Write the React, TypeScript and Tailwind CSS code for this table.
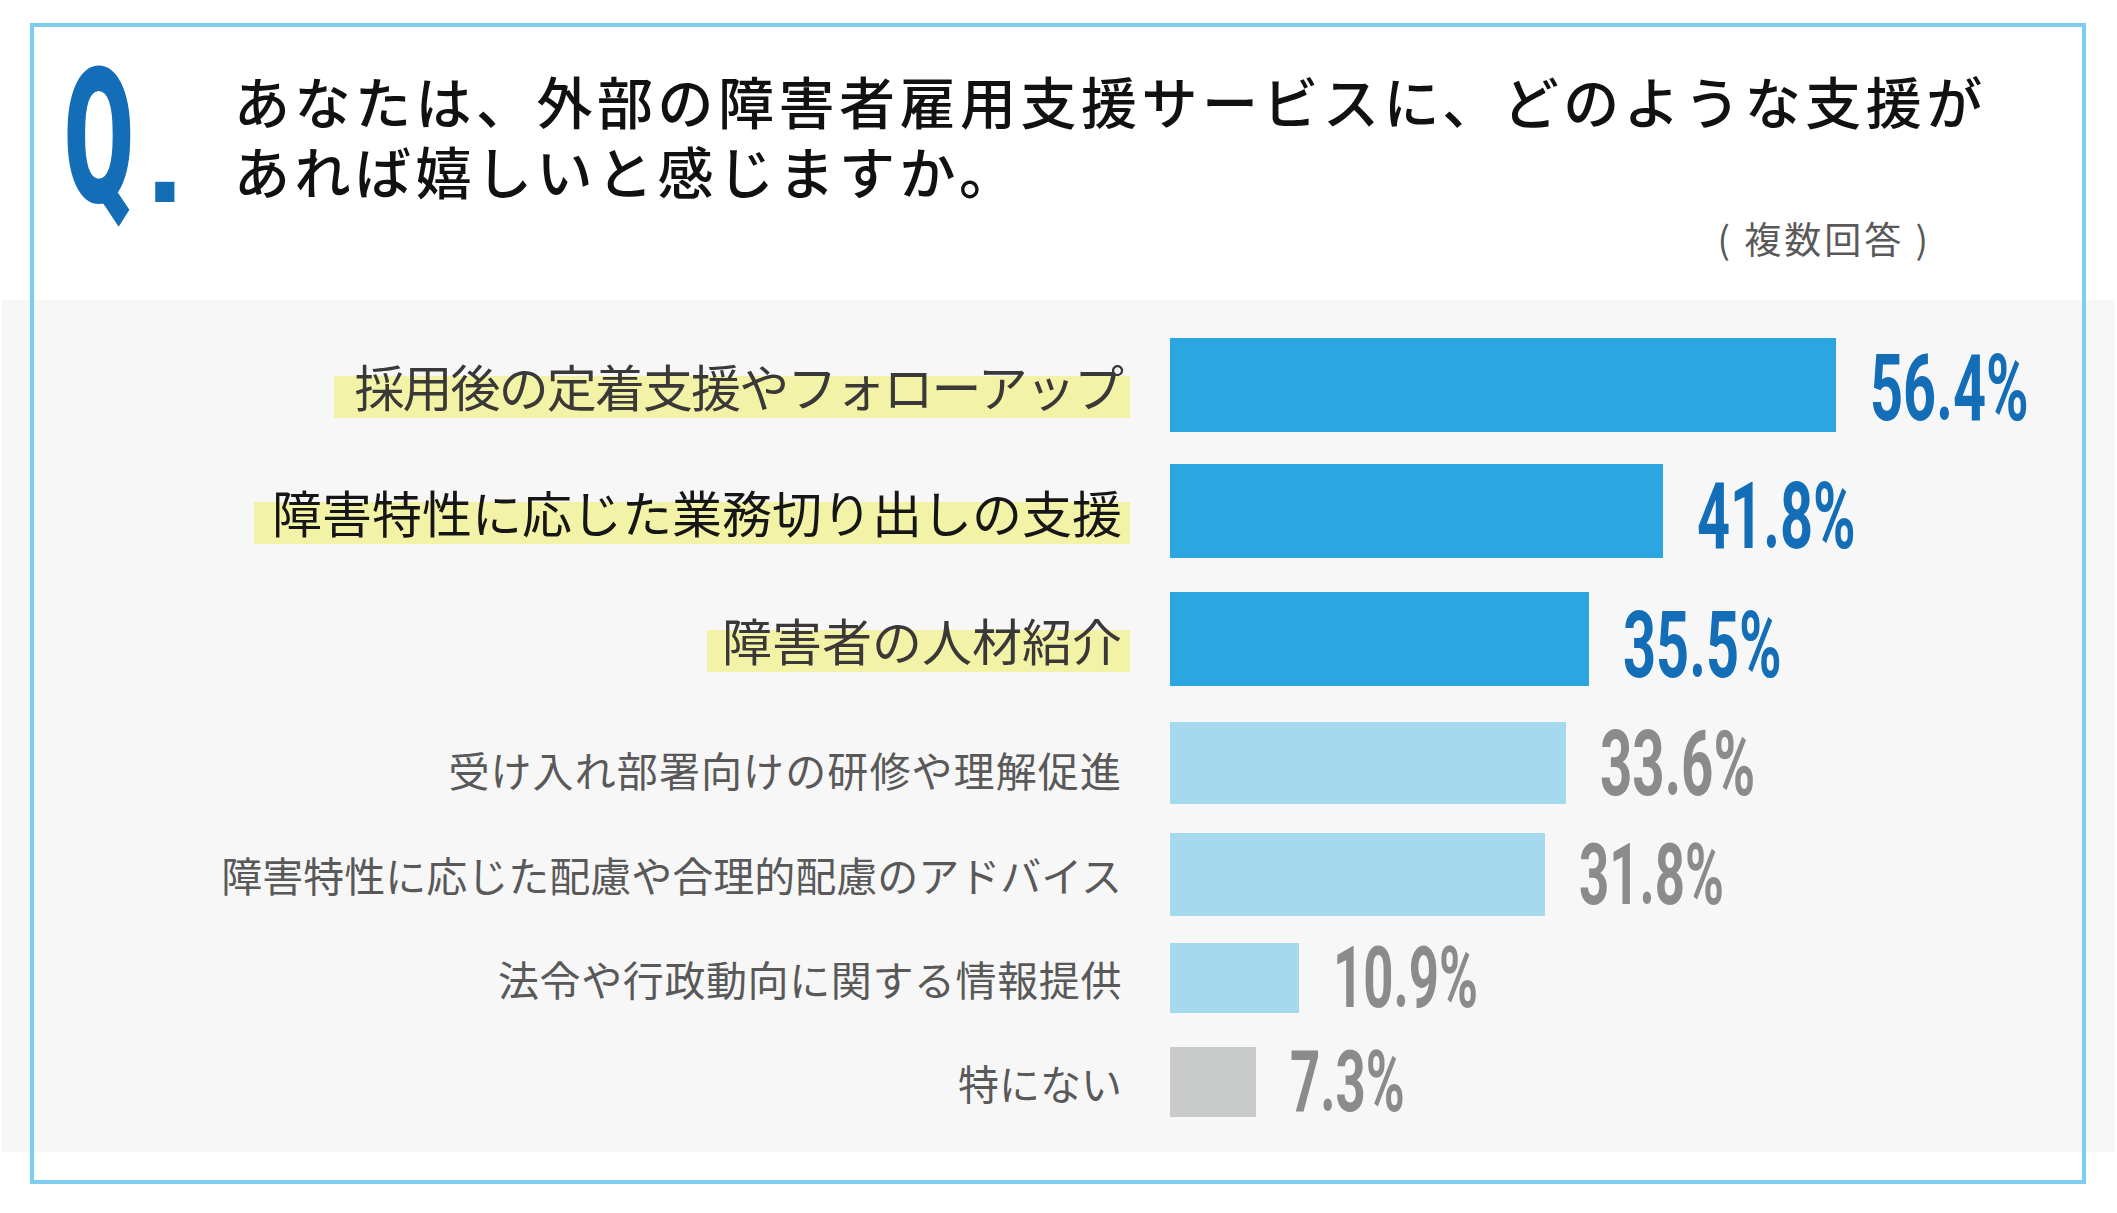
import React from "react";

type Row = {
  label: string;
  pct: number;
  hl: boolean;
  mt: string;
  h: string;
  bar: string;
  text: string;
  pl: string;
  num: string;
};

const rows: Row[] = [
  {
    label: "採用後の定着支援やフォローアップ",
    pct: 56.4,
    hl: true,
    mt: "mt-[38px]",
    h: "h-[94px]",
    bar: "bg-[#2ba6e0]",
    text: "text-[#3b3838] tracking-[-1.9px]",
    pl: "pl-[20px]",
    num: "text-[93px] text-[#136eb7] translate-y-[3px]",
  },
  {
    label: "障害特性に応じた業務切り出しの支援",
    pct: 41.8,
    hl: true,
    mt: "mt-[32px]",
    h: "h-[94px]",
    bar: "bg-[#2ba6e0]",
    text: "text-[#161616]",
    pl: "pl-[18px]",
    num: "text-[93px] text-[#136eb7] translate-y-[5px]",
  },
  {
    label: "障害者の人材紹介",
    pct: 35.5,
    hl: true,
    mt: "mt-[34px]",
    h: "h-[94px]",
    bar: "bg-[#2ba6e0]",
    text: "text-[#3b3838]",
    pl: "pl-[15px]",
    num: "text-[93px] text-[#136eb7] translate-y-[6px]",
  },
  {
    label: "受け入れ部署向けの研修や理解促進",
    pct: 33.6,
    hl: false,
    mt: "mt-[36px]",
    h: "h-[82px]",
    bar: "bg-[#a5d9ee]",
    text: "tracking-[1.1px] translate-y-[6px]",
    pl: "",
    num: "text-[91px] text-[#8b8b8b] translate-y-[1px]",
  },
  {
    label: "障害特性に応じた配慮や合理的配慮のアドバイス",
    pct: 31.8,
    hl: false,
    mt: "mt-[29px]",
    h: "h-[83px]",
    bar: "bg-[#a5d9ee]",
    text: "",
    pl: "",
    num: "text-[85px] text-[#8b8b8b] translate-y-[1px]",
  },
  {
    label: "法令や行政動向に関する情報提供",
    pct: 10.9,
    hl: false,
    mt: "mt-[27px]",
    h: "h-[70px]",
    bar: "bg-[#a5d9ee]",
    text: "tracking-[0.6px]",
    pl: "",
    num: "text-[85px] text-[#8b8b8b]",
  },
  {
    label: "特にない",
    pct: 7.3,
    hl: false,
    mt: "mt-[34px]",
    h: "h-[70px]",
    bar: "bg-[#c9caca]",
    text: "",
    pl: "",
    num: "text-[85px] text-[#8b8b8b]",
  },
];

function BarRow({ r }: { r: Row }) {
  return (
    <div className={`flex items-center ${r.mt} ${r.h}`}>
      <div className="w-[1128px] shrink-0 flex justify-end items-center">
        {r.hl ? (
          <span
            className={`block whitespace-nowrap leading-none text-[50px] pb-[8px] -mb-[8px] pr-[8px] bg-[linear-gradient(to_bottom,transparent_16px,#f3f3a8_16px)] ${r.pl} ${r.text}`}
          >
            {r.label}
          </span>
        ) : (
          <span
            className={`block whitespace-nowrap leading-none text-[41px] pr-[8px] text-[#595959] ${r.text}`}
          >
            {r.label}
          </span>
        )}
      </div>
      <div
        className={`ml-[40px] h-full shrink-0 ${r.bar}`}
        style={{ width: `${r.pct * 11.8}px` }}
      />
      <span
        className={`ml-[34px] shrink-0 inline-block origin-left scale-x-[0.62] leading-none font-bold font-['Roboto',sans-serif] whitespace-nowrap ${r.num}`}
      >
        {r.pct.toFixed(1)}%
      </span>
    </div>
  );
}

export default function App() {
  return (
    <div className="relative w-[2117px] h-[1213px] overflow-hidden bg-white font-['Noto_Sans_CJK_JP',sans-serif]">
      <div className="h-[300px] flex flex-col">
        <div className="flex items-start pt-[65px] pl-[64px]">
          <div className="w-[170px] h-[140px] shrink-0 mt-[2px] flex items-baseline leading-[140px] text-[#136eb7]">
            <span className="w-[82px] inline-block origin-left scale-x-[0.53] text-[190px] font-black font-['Roboto',sans-serif]">
              Q
            </span>
            <span className="text-[136px] font-bold font-['Liberation_Sans',sans-serif]">
              .
            </span>
          </div>
          <div className="whitespace-nowrap text-[56px] leading-[70px] tracking-[4.5px] font-medium text-[#111]">
            あなたは、外部の障害者雇用支援サービスに、どのような支援が
            <br />
            あれば嬉しいと感じますか。
          </div>
        </div>
        <div className="mt-[13px] text-right pr-[186px] text-[37px] leading-none tracking-[3px] text-[#595959] whitespace-nowrap">
          ( 複数回答 )
        </div>
      </div>

      <div className="mx-[2px] h-[852px] bg-[#f7f7f7] flex flex-col overflow-hidden">
        {rows.map((r) => (
          <BarRow key={r.label} r={r} />
        ))}
      </div>

      <div className="pointer-events-none absolute left-[30px] top-[23px] w-[2056px] h-[1161px] border-4 border-[#7ecdee]" />
    </div>
  );
}
